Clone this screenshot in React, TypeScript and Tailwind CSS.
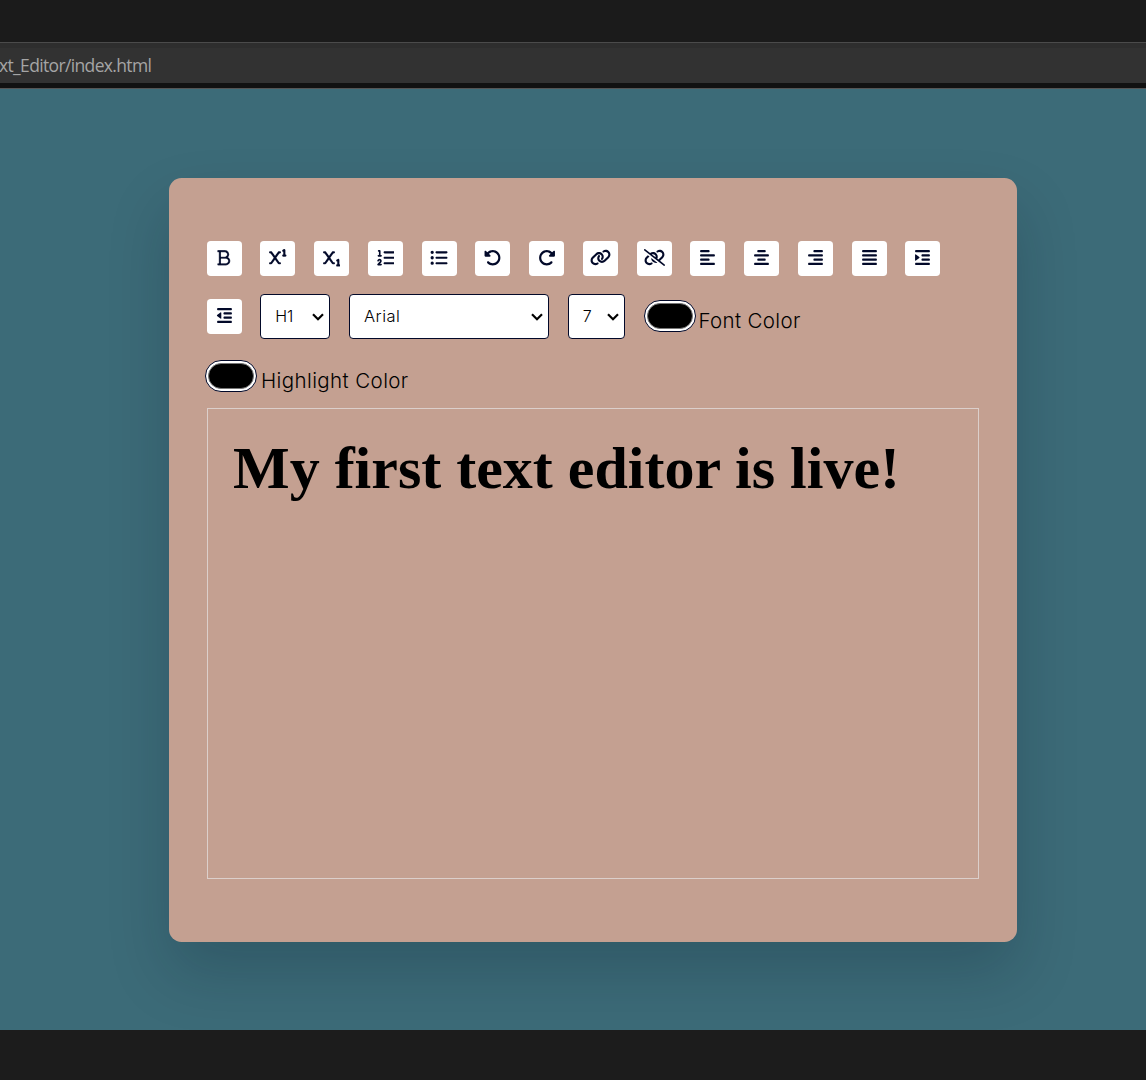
import type { IconType } from "react-icons";
import {
  FaBold, FaSuperscript, FaSubscript, FaListOl, FaListUl, FaRotateLeft, FaRotateRight,
  FaLink, FaLinkSlash, FaAlignLeft, FaAlignCenter, FaAlignRight, FaAlignJustify, FaIndent, FaOutdent,
} from "react-icons/fa6";

const TOOLS: { name: string; Icon: IconType; size?: string }[] = [
  { name: "Bold", Icon: FaBold, size: "size-[17.5px] stroke-white [stroke-width:9px]" },
  { name: "Superscript", Icon: FaSuperscript, size: "size-[17.5px] stroke-white [stroke-width:3px]" },
  { name: "Subscript", Icon: FaSubscript, size: "size-[17.5px] stroke-white [stroke-width:3px]" },
  { name: "Ordered list", Icon: FaListOl, size: "size-[17.5px]" },
  { name: "Unordered list", Icon: FaListUl, size: "size-[17.5px]" },
  { name: "Undo", Icon: FaRotateLeft, size: "size-[17.5px]" },
  { name: "Redo", Icon: FaRotateRight, size: "size-[17.5px]" },
  { name: "Link", Icon: FaLink, size: "h-[17px] w-[21px]" },
  { name: "Unlink", Icon: FaLinkSlash, size: "h-[17px] w-[21px]" },
  { name: "Align left", Icon: FaAlignLeft, size: "size-[17px]" },
  { name: "Align center", Icon: FaAlignCenter, size: "size-[17px]" },
  { name: "Align right", Icon: FaAlignRight, size: "size-[17px]" },
  { name: "Justify", Icon: FaAlignJustify, size: "size-[17px]" },
  { name: "Indent", Icon: FaIndent, size: "size-[17px]" },
  { name: "Outdent", Icon: FaOutdent, size: "size-[17px]" },
];

function Select({ value, width, text }: { value: string; width: string; text: string }) {
  return (
    <button
      className={`flex h-[45px] items-center justify-between rounded-[4px] border border-[#020929] bg-white pr-[5px] pl-[14px] text-black ${width}`}
    >
      <span className={`-mt-px ${text}`}>{value}</span>
      <svg className="mt-px h-[8px] w-[12px]" viewBox="0 0 12 8" fill="none" stroke="#000" strokeWidth="2.2">
        <path d="M1 1.2 6 6.2 11 1.2" />
      </svg>
    </button>
  );
}

function ColorInput({ label, text }: { label: string; text: string }) {
  return (
    <div className="flex h-8 items-start">
      <button aria-label={label} className="h-8 w-[52px] rounded-full border-[1.5px] border-[#020929] bg-white p-[2px]">
        <span className="block h-full rounded-full border border-[#777] bg-black" />
      </button>
      <label className={`pt-[6px] text-[20.5px] leading-[30px] font-[350] text-black ${text}`}>{label}</label>
    </div>
  );
}

export default function App() {
  return (
    <div className="flex h-[1080px] w-[1146px] flex-col overflow-hidden bg-[#1c1c1c] font-[Inter,sans-serif]">
      <div className="h-[42px] bg-[#1b1b1b]" />
      <div className="h-[41px] border-t border-[#4b4b4b] bg-[#323232]">
        <div className="border-t-[5px] border-[#2e2e2e] pt-[5px] font-['Open_Sans',sans-serif] text-[17.5px] leading-[25px] tracking-[-0.65px] text-[#a5a5a5]">
          <span className="-ml-px">xt_Editor/index.html</span>
        </div>
      </div>
      <div className="h-[5px] bg-[#111111]" />
      <main className="h-[942px] overflow-hidden border-t border-[#555] bg-[#3c6b78] pt-[89.4px] pl-[169px]">
        <section className="h-[763.6px] w-[848px] rounded-[12.5px] bg-[#c4a091] px-[37.5px] pt-[62.5px] shadow-[0_31px_62px_rgba(7,20,35,0.2)]">
          <div className="flex h-[167.1px] flex-wrap content-start items-center gap-x-[18.75px] gap-y-[18px]">
            {TOOLS.map(({ name, Icon, size }) => (
              <button key={name} aria-label={name} className="grid size-[35px] place-items-center rounded-[3.75px] bg-white pb-[1px] text-[#020929]">
                <Icon className={size} />
              </button>
            ))}
            <Select value="H1" width="w-[70px]" text="text-[16px] font-[350]" />
            <Select value="Arial" width="w-[200px]" text="text-[16.5px] font-[350] tracking-[0.5px]" />
            <Select value="7" width="w-[57px]" text="text-[16px] font-[350]" />
            <ColorInput label="Font Color" text="ml-[3px] tracking-[0.35px]" />
            <div className="-ml-[1.5px] w-full pt-[3px]">
              <ColorInput label="Highlight Color" text="ml-[4px] tracking-[0.4px]" />
            </div>
          </div>
          <div className="h-[471px] w-[772px] border border-[#dccfcb] pt-[25px] pl-[25.5px]">
            <h1 className="font-['Liberation_Serif',serif] text-[60px] leading-[69px] font-bold whitespace-nowrap text-black">
              My first text editor is live!
            </h1>
          </div>
        </section>
      </main>
      <footer className="flex-1 bg-[#1c1c1c]" />
    </div>
  );
}
